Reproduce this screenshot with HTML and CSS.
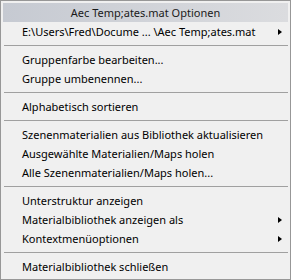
FILE: index.html
```html
<!DOCTYPE html>
<html>
<head>
<meta charset="utf-8">
<link rel="stylesheet" href="styles.css">
</head>
<body>
<div class="menu">
  <div class="title">Aec Temp;ates.mat Optionen</div>
  <div class="item sub"><span>E:\Users\Fred\Docume ... \Aec Temp;ates.mat</span><span class="arrow"></span></div>
  <div class="sep"></div>
  <div class="item"><span>Gruppenfarbe bearbeiten...</span></div>
  <div class="item"><span>Gruppe umbenennen...</span></div>
  <div class="sep"></div>
  <div class="item"><span>Alphabetisch sortieren</span></div>
  <div class="sep"></div>
  <div class="item"><span>Szenenmaterialien aus Bibliothek aktualisieren</span></div>
  <div class="item"><span>Ausgewählte Materialien/Maps holen</span></div>
  <div class="item"><span>Alle Szenenmaterialien/Maps holen...</span></div>
  <div class="sep"></div>
  <div class="item"><span>Unterstruktur anzeigen</span></div>
  <div class="item sub"><span>Materialbibliothek anzeigen als</span><span class="arrow"></span></div>
  <div class="item sub"><span>Kontextmenüoptionen</span><span class="arrow"></span></div>
  <div class="sep"></div>
  <div class="item"><span>Materialbibliothek schließen</span></div>
</div>
</body>
</html>
```
FILE: styles.css
```css
html, body {
  margin: 0;
  padding: 0;
  background: #f0f0f0;
}
.menu {
  width: 291px;
  height: 280px;
  box-sizing: border-box;
  border: 1px solid #979797;
  padding: 2px;
  background: #f0f0f0;
  font-family: "Noto Sans", "Open Sans", sans-serif;
  font-size: 11px;
  color: #000;
  display: flex;
  flex-direction: column;
}
.title {
  height: 19px;
  flex: none;
  display: flex;
  align-items: center;
  justify-content: center;
  background: linear-gradient(to right, #c6cad2, #dbdcdf);
  color: #1a1a1a;
  line-height: 19px;
}
.item {
  height: 19px;
  flex: none;
  line-height: 19px;
  padding-left: 19px;
  padding-right: 6px;
  display: flex;
  align-items: center;
  justify-content: space-between;
  white-space: nowrap;
}
.arrow {
  width: 0;
  height: 0;
  border-top: 3.5px solid transparent;
  border-bottom: 3.5px solid transparent;
  border-left: 4px solid #000;
}
.sep {
  height: 9px;
  flex: none;
  display: flex;
  align-items: center;
  padding-left: 1px;
}
.sep::before {
  content: "";
  display: block;
  width: 100%;
  height: 1px;
  background: #a0a0a0;
}
```
